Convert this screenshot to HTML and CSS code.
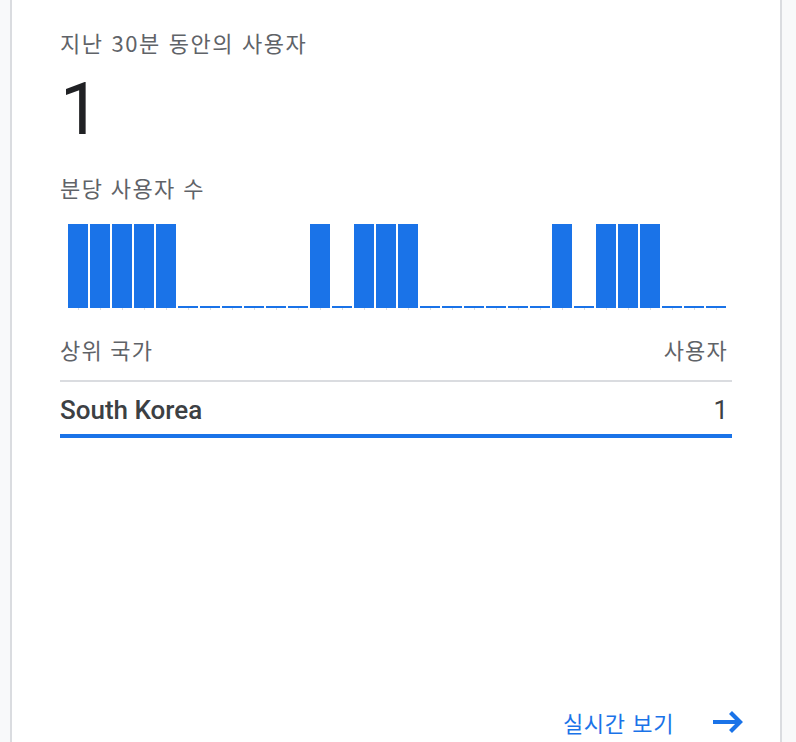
FILE: index.html
```html
<!DOCTYPE html>
<html lang="ko">
<head>
<meta charset="utf-8">
<link rel="stylesheet" href="styles.css">
</head>
<body>
<div class="card">
  <div class="title">지난 30분 동안의 사용자</div>
  <div class="count">1</div>
  <div class="chart-label">분당 사용자 수</div>
  <div class="chart">
    <div class="col"><div class="bar on"></div></div>
    <div class="col"><div class="bar on"></div></div>
    <div class="col"><div class="bar on"></div></div>
    <div class="col"><div class="bar on"></div></div>
    <div class="col"><div class="bar on"></div></div>
    <div class="col"><div class="bar off"></div></div>
    <div class="col"><div class="bar off"></div></div>
    <div class="col"><div class="bar off"></div></div>
    <div class="col"><div class="bar off"></div></div>
    <div class="col"><div class="bar off"></div></div>
    <div class="col"><div class="bar off"></div></div>
    <div class="col"><div class="bar on"></div></div>
    <div class="col"><div class="bar off"></div></div>
    <div class="col"><div class="bar on"></div></div>
    <div class="col"><div class="bar on"></div></div>
    <div class="col"><div class="bar on"></div></div>
    <div class="col"><div class="bar off"></div></div>
    <div class="col"><div class="bar off"></div></div>
    <div class="col"><div class="bar off"></div></div>
    <div class="col"><div class="bar off"></div></div>
    <div class="col"><div class="bar off"></div></div>
    <div class="col"><div class="bar off"></div></div>
    <div class="col"><div class="bar on"></div></div>
    <div class="col"><div class="bar off"></div></div>
    <div class="col"><div class="bar on"></div></div>
    <div class="col"><div class="bar on"></div></div>
    <div class="col"><div class="bar on"></div></div>
    <div class="col"><div class="bar off"></div></div>
    <div class="col"><div class="bar off"></div></div>
    <div class="col"><div class="bar off"></div></div>
  </div>
  <div class="table">
    <div class="thead">
      <span>상위 국가</span>
      <span class="right">사용자</span>
    </div>
    <div class="trow">
      <span class="country">South Korea</span>
      <span class="num">1</span>
    </div>
  </div>
  <div class="spacer"></div>
  <div class="footer">
    <a class="link" href="#">
      <span>실시간 보기</span>
      <svg class="arrow" width="32" height="24" viewBox="0 0 32 24" aria-hidden="true">
        <path d="M1 12 H28" stroke="#1a73e8" stroke-width="4" fill="none"/>
        <path d="M18.5 2.5 L28 12 L18.5 21.5" stroke="#1a73e8" stroke-width="4.2" fill="none" stroke-linejoin="miter" stroke-linecap="butt"/>
      </svg>
    </a>
  </div>
</div>
</body>
</html>
```

FILE: styles.css
```css
html, body {
  margin: 0;
  padding: 0;
}
body {
  background: #f8f9fa;
  height: 742px;
  overflow: hidden;
  font-family: "Noto Sans CJK KR", Roboto, sans-serif;
}
.card {
  margin-left: 10px;
  width: 772px;
  height: 742px;
  box-sizing: border-box;
  background: #fff;
  border-left: 2px solid #dadce0;
  border-right: 2px solid #dadce0;
  padding: 28px 48px 0 48px;
  display: flex;
  flex-direction: column;
}
.title {
  font-size: 22px;
  line-height: 28px;
  color: #5f6368;
  letter-spacing: 1.6px;
}
.count {
  margin-top: 14px;
  font-family: Roboto, sans-serif;
  font-size: 72px;
  line-height: 80px;
  color: #202124;
}
.chart-label {
  margin-top: 23px;
  font-size: 22px;
  line-height: 28px;
  color: #5f6368;
  letter-spacing: 1.4px;
}
.chart {
  margin-top: 23px;
  padding-left: 8px;
  display: flex;
  gap: 2px;
  height: 86px;
}
.col {
  width: 20px;
  display: flex;
  flex-direction: column;
  justify-content: flex-end;
  align-items: center;
}
.col::after {
  content: "";
  width: 1px;
  height: 2px;
  background: #dadce0;
}
.bar {
  width: 20px;
  background: #1a73e8;
}
.bar.on { height: 84px; }
.bar.off { height: 2px; }
.table {
  margin-top: 25px;
}
.thead {
  display: flex;
  justify-content: space-between;
  font-size: 22px;
  line-height: 28px;
  color: #5f6368;
  letter-spacing: 1.2px;
  padding-bottom: 17px;
  border-bottom: 2px solid #dadce0;
}
.thead .right {
  padding-right: 4px;
}
.trow {
  display: flex;
  justify-content: space-between;
  font-family: Roboto, sans-serif;
  font-size: 26px;
  line-height: 32px;
  font-weight: 500;
  color: #3c4043;
  padding-top: 12px;
  padding-bottom: 8px;
  border-bottom: 4px solid #1a73e8;
}
.trow .num {
  font-weight: 400;
  padding-right: 4px;
}
.spacer {
  flex: 1;
}
.footer {
  display: flex;
  justify-content: flex-end;
  margin-right: -12px;
  padding-bottom: 6px;
}
.link {
  display: flex;
  align-items: center;
  gap: 38px;
  color: #1a73e8;
  text-decoration: none;
  font-size: 22px;
  line-height: 28px;
  letter-spacing: 0.6px;
}
.arrow {
  display: block;
}
```
